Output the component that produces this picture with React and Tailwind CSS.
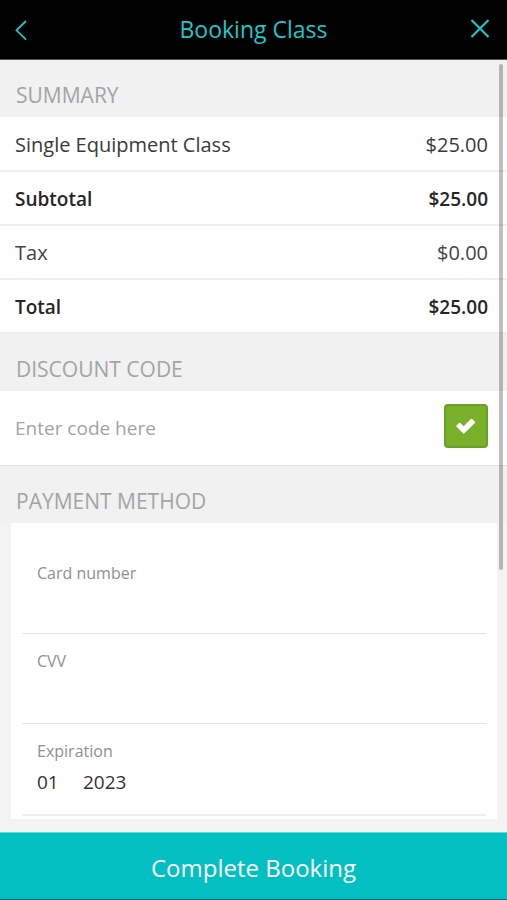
import React from 'react';

const summary = [
  { label: 'Single Equipment Class', amount: '$25.00', style: 'text-xl text-[#3a3a3a]' },
  { label: 'Subtotal', amount: '$25.00', style: 'text-[19px] font-semibold text-[#262626]' },
  { label: 'Tax', amount: '$0.00', style: 'text-xl text-[#444444]' },
  { label: 'Total', amount: '$25.00', style: 'text-[19px] font-semibold text-[#262626]' },
];

const cardFields = [
  { id: 'card-number', label: 'Card number', size: 'h-[88px]' },
  { id: 'cvv', label: 'CVV', size: 'h-[90px]' },
];

function SectionHeading({ children }) {
  return (
    <h2 className="flex h-[57px] items-end bg-[#f1f1f1] px-4 pb-2 text-[21px] leading-7 text-[#a1a5a5]">
      {children}
    </h2>
  );
}

function Header() {
  return (
    <header className="flex h-[60px] items-center justify-between border-b border-[#555555] bg-black px-[15px] text-[#1cc8ca]">
      <button type="button" aria-label="Back" className="flex w-8 items-center">
        <svg width="14" height="24" viewBox="3 0 14 24" fill="none" stroke="currentColor" strokeWidth="1.8">
          <path d="M14 3 4.5 12.3 14 21.6" />
        </svg>
      </button>
      <h1 className="pb-[2px] text-[23px] leading-8">Booking Class</h1>
      <button type="button" aria-label="Close" className="flex w-8 items-center justify-end">
        <svg width="24" height="24" viewBox="0 0 24 24" fill="none" stroke="currentColor" strokeWidth="2.1">
          <path d="M3.5 2 20.5 19M20.5 2 3.5 19" />
        </svg>
      </button>
    </header>
  );
}

export default function App() {
  return (
    <div className="relative flex min-h-screen flex-col bg-[#f3f3f3] font-['Open_Sans',sans-serif]">
      <Header />

      <main className="grow">
        <SectionHeading>SUMMARY</SectionHeading>
        <table className="w-full bg-white">
          <tbody>
            {summary.map((row) => (
              <tr key={row.label} className={`h-[54px] border-b-2 border-[#eeeeee] ${row.style}`}>
                <td className="pt-[2px] pl-[15px]">{row.label}</td>
                <td className="pt-[2px] pr-[19px] text-right">{row.amount}</td>
              </tr>
            ))}
          </tbody>
        </table>

        <SectionHeading>DISCOUNT CODE</SectionHeading>
        <form className="flex h-[75px] items-center gap-4 border-b border-[#e2e2e2] bg-white pr-[19px] pb-1 pl-[15px]">
          <input
            type="text"
            aria-label="Discount code"
            placeholder="Enter code here"
            className="min-w-0 grow bg-transparent pt-1 text-[19px] text-[#3a3a3a] outline-none placeholder:text-[#a1a5a5]"
          />
          <button
            type="button"
            aria-label="Apply code"
            className="flex size-11 items-center justify-center rounded border-2 border-[#6b9f25] bg-[#79b02a] text-white"
          >
            <svg width="20" height="16" viewBox="0 0 20 16" fill="currentColor">
              <path d="M.6 7.4 2.9 5.1Q3.6 4.4 4.3 5.1L7.7 8.2 14.8 1Q15.5.3 16.2 1L18.9 3.7Q19.6 4.4 18.9 5.1L8.4 15.3Q7.7 16 7 15.3L.6 8.8Q-.1 8.1.6 7.4Z" />
            </svg>
          </button>
        </form>

        <SectionHeading>PAYMENT METHOD</SectionHeading>
        <div className="mr-[10px] ml-[11px] bg-white px-[11px] pt-[23px] pb-[3px]">
          {cardFields.map((field) => (
            <div key={field.id} className={`flex flex-col border-b border-[#e4e4e4] px-[15px] pt-[15px] ${field.size}`}>
              <label htmlFor={field.id} className="text-base leading-6 text-[#8f8f8f]">
                {field.label}
              </label>
              <input id={field.id} type="text" className="w-full grow text-[19px] text-[#333333] outline-none" />
            </div>
          ))}
          <div
            role="group"
            aria-labelledby="expiration"
            className="h-[92px] border-b-2 border-[#eeeeee] px-[15px] pt-[15px]"
          >
            <div id="expiration" className="text-base leading-6 text-[#8f8f8f]">
              Expiration
            </div>
            <div className="flex gap-6 pt-[3px] text-[19px] text-[#333333]">
              <select aria-label="Expiration month" className="h-8 appearance-none outline-none">
                <option>01</option>
              </select>
              <select aria-label="Expiration year" className="h-8 appearance-none outline-none">
                <option>2023</option>
              </select>
            </div>
          </div>
        </div>
      </main>

      <footer className="sticky bottom-0">
        <button
          type="button"
          className="h-[68px] w-full border-t border-b border-t-[#5fdcdc] border-b-[#06666b] bg-[#02c0c1] pt-1 text-2xl text-white"
        >
          Complete Booking
        </button>
      </footer>

      {/* Scroll indicator */}
      <div className="absolute top-16 right-1 h-[506px] w-1 rounded-full bg-black/25" />
    </div>
  );
}
